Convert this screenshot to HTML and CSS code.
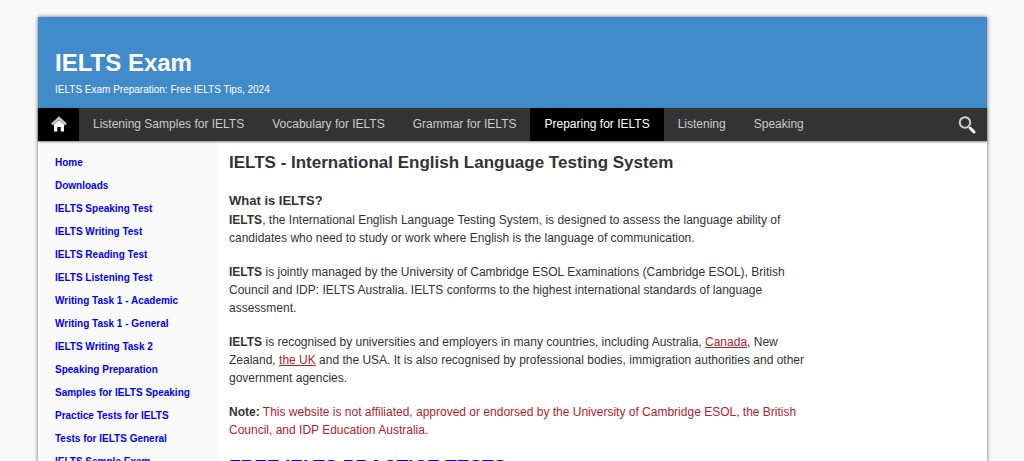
FILE: index.html
```html
<!DOCTYPE html>
<html lang="en">
<head>
<meta charset="utf-8">
<meta name="viewport" content="width=device-width, initial-scale=1">
<title>IELTS Exam</title>
<link rel="stylesheet" href="styles.css">
</head>
<body>
<div class="page">
  <header class="banner">
    <h1 class="site-title">IELTS Exam</h1>
    <p class="tagline">IELTS Exam Preparation: Free IELTS Tips, 2024</p>
  </header>
  <nav class="menu" aria-label="Main">
    <a class="home" href="#" aria-label="Home">
      <svg width="16" height="18" viewBox="0 0 16 18" aria-hidden="true">
        <path d="M3 8.500 8 4l5 4.500V15.500H9.700V11H6.300V15.500H3z" fill="#fff"/>
        <path d="M1 8.500 8 2l7 6.500" fill="none" stroke="#c4c4c4" stroke-width="2.400"/>
      </svg>
    </a>
    <a class="item" href="#">Listening Samples for IELTS</a>
    <a class="item" href="#">Vocabulary for IELTS</a>
    <a class="item" href="#">Grammar for IELTS</a>
    <a class="item current" href="#" aria-current="page">Preparing for IELTS</a>
    <a class="item" href="#">Listening</a>
    <a class="item" href="#">Speaking</a>
    <button class="search" type="button" aria-label="Search">
      <svg width="18" height="18" viewBox="0 0 18 18" aria-hidden="true">
        <circle cx="7" cy="6.500" r="5.200" fill="none" stroke="#d0d0d0" stroke-width="2"/>
        <path d="M10.500 10.500 12.500 12.500" stroke="#aaa" stroke-width="1.500"/>
        <path d="M12.300 12.300 16 16" stroke="#fff" stroke-width="3" stroke-linecap="round"/>
      </svg>
    </button>
  </nav>
  <div class="columns">
    <aside class="sidebar">
      <ul class="links">
        <li><a href="#">Home</a></li>
        <li><a href="#">Downloads</a></li>
        <li><a href="#">IELTS Speaking Test</a></li>
        <li><a href="#">IELTS Writing Test</a></li>
        <li><a href="#">IELTS Reading Test</a></li>
        <li><a href="#">IELTS Listening Test</a></li>
        <li><a href="#">Writing Task 1 - Academic</a></li>
        <li><a href="#">Writing Task 1 - General</a></li>
        <li><a href="#">IELTS Writing Task 2</a></li>
        <li><a href="#">Speaking Preparation</a></li>
        <li><a href="#">Samples for IELTS Speaking</a></li>
        <li><a href="#">Practice Tests for IELTS</a></li>
        <li><a href="#">Tests for IELTS General</a></li>
        <li><a href="#">IELTS Sample Exam</a></li>
      </ul>
    </aside>
    <main class="content">
      <h2 class="heading">IELTS - International English Language Testing System</h2>
      <h3 class="subheading">What is IELTS?</h3>
      <p><b>IELTS</b>, the International English Language Testing System, is designed to assess the language ability of<br>candidates who need to study or work where English is the language of communication.</p>
      <p><b>IELTS</b> is jointly managed by the University of Cambridge ESOL Examinations (Cambridge ESOL), British<br>Council and IDP: IELTS Australia. IELTS conforms to the highest international standards of language<br>assessment.</p>
      <p><b>IELTS</b> is recognised by universities and employers in many countries, including Australia, <a href="#">Canada</a>, New<br>Zealand, <a href="#">the UK</a> and the USA. It is also recognised by professional bodies, immigration authorities and other<br>government agencies.</p>
      <p><b>Note:</b> <span class="note">This website is not affiliated, approved or endorsed by the University of Cambridge ESOL, the British<br>Council, and IDP Education Australia.</span></p>
      <h2 class="practice"><a href="#">FREE IELTS PRACTICE TESTS</a></h2>
    </main>
  </div>
</div>
</body>
</html>
```
FILE: styles.css
```css
* { box-sizing: border-box; }
html { overflow: hidden; }
body {
  margin: 0;
  padding: 17px 37px 0 38px;
  background: #f9f9f9;
  color: #333;
  font: 12px/18px "Liberation Sans", Arial, sans-serif;
}
h1, h2, h3, p, ul { margin: 0; padding: 0; }
.page {
  background: #fff;
  box-shadow: 0 0 4px rgba(0, 0, 0, 0.6);
}
.banner {
  padding: 32px 17px 10px;
  background: #428bca;
  color: #fff;
}
.site-title { font-size: 24px; line-height: 28px; }
.tagline { padding-top: 5px; font-size: 10px; line-height: 16px; }
.menu {
  position: relative;
  display: flex;
  height: 33px;
  background: #333;
  box-shadow: 0 1px 2px rgba(0, 0, 0, 0.5);
}
.home {
  display: flex;
  align-items: center;
  justify-content: center;
  width: 41px;
  background: #000;
}
.item {
  padding: 0 14px;
  color: #ccc;
  line-height: 33px;
  text-decoration: none;
}
.current { background: #000; color: #fff; }
.search {
  display: flex;
  align-items: center;
  margin-left: auto;
  padding: 0 11px;
  border: 0;
  background: none;
}
.columns { display: flex; }
.sidebar {
  flex: 0 0 179px;
  padding: 10px 0 0 17px;
  background: #fafafa;
}
.links {
  list-style: none;
  font-size: 10px;
  font-weight: bold;
  line-height: 23px;
}
.links a { color: #00f; text-decoration: none; }
.content { flex: 1; padding: 10px 12px 0; }
.content p { margin-bottom: 16px; }
.content p a, .note { color: #b5222c; }
.heading { font-size: 17px; line-height: 24px; }
.subheading { margin-top: 16px; font-size: 13px; line-height: 20px; }
.practice { font-size: 19px; line-height: 24px; }
.practice a { color: #00f; text-decoration: none; }
```
